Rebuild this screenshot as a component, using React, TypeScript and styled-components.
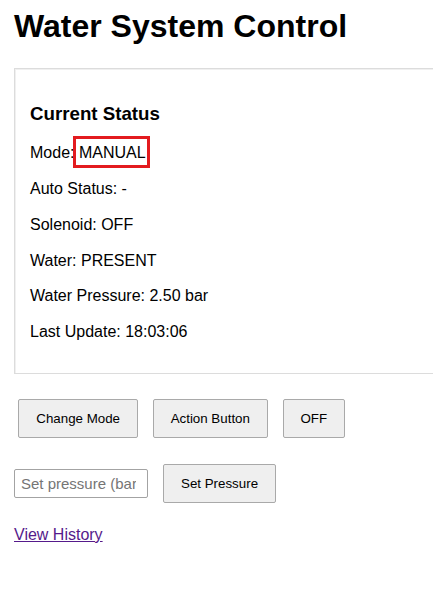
import React from "react";
import styled, { createGlobalStyle } from "styled-components";

const Global = createGlobalStyle`
  html, body {
    margin: 0;
    padding: 0;
    background: #ffffff;
    overflow-x: hidden;
  }
  body {
    padding: 0 14px;
    font-family: "Liberation Sans", Arial, sans-serif;
    color: #000000;
  }
`;

const Title = styled.h1`
  font-size: 32px;
  font-weight: 700;
  line-height: normal;
  margin: 7.5px 0 23.5px;
`;

const Panel = styled.section`
  width: 100%;
  box-sizing: content-box;
  border: 1px solid #dcdcdc;
  box-shadow: 1px 1px 0 #f0f0f0 inset;
  padding: 15px;
`;

const PanelHeading = styled.h3`
  font-size: 18.72px;
  font-weight: 700;
  line-height: normal;
  margin: 18.72px 0;
`;

const StatusLine = styled.p`
  font-size: 16px;
  line-height: 19.7px;
  margin: 16px 0;
`;

const Highlight = styled.span`
  position: relative;
  &::after {
    content: "";
    position: absolute;
    left: -5.6px;
    right: -4.4px;
    top: -8.5px;
    bottom: -6.3px;
    border: 3px solid #e31b1f;
    pointer-events: none;
  }
`;

const ButtonRow = styled.div`
  display: flex;
  align-items: center;
  gap: 14.6px;
  margin-top: 25px;
  padding-left: 4.3px;
`;

const InputRow = styled.div`
  display: flex;
  align-items: center;
  gap: 15px;
  margin-top: 26.7px;
`;

const Button = styled.button`
  font-family: "Liberation Sans", Arial, sans-serif;
  font-size: 13.333px;
  line-height: normal;
  color: #000000;
  background: #efefef;
  border: 1px solid #a9a9a9;
  border-radius: 2px;
  padding: 11px 17px;
  margin: 0;
  cursor: pointer;
`;

const PressureInput = styled.input`
  box-sizing: border-box;
  width: 134px;
  height: 29px;
  font-family: "Liberation Sans", Arial, sans-serif;
  font-size: 15px;
  padding: 0 11px 0 6px;
  margin: 0;
  border: 1px solid #a3a3a3;
  border-radius: 2px;
  background: #ffffff;
  color: #000;
  &::placeholder {
    color: #757575;
  }
`;

const LinkLine = styled.p`
  font-size: 16px;
  line-height: normal;
  margin: 22.7px 0 0;
`;

const HistoryLink = styled.a`
  color: #551a8b;
  text-decoration: underline;
`;

export default function App() {
  const rows: [string, React.ReactNode][] = [
    ["Auto Status", "-"],
    ["Solenoid", "OFF"],
    ["Water", "PRESENT"],
    ["Water Pressure", "2.50 bar"],
    ["Last Update", "18:03:06"],
  ];
  return (
    <>
      <Global />
      <Title>Water System Control</Title>
      <Panel>
        <PanelHeading>Current Status</PanelHeading>
        <StatusLine>
          Mode: <Highlight>MANUAL</Highlight>
        </StatusLine>
        {rows.map(([label, value]) => (
          <StatusLine key={label}>
            {label}: {value}
          </StatusLine>
        ))}
      </Panel>
      <ButtonRow>
        <Button>Change Mode</Button>
        <Button>Action Button</Button>
        <Button>OFF</Button>
      </ButtonRow>
      <InputRow>
        <PressureInput type="text" inputMode="decimal" placeholder="Set pressure (bar)" />
        <Button>Set Pressure</Button>
      </InputRow>
      <LinkLine>
        <HistoryLink href="#history">View History</HistoryLink>
      </LinkLine>
    </>
  );
}
